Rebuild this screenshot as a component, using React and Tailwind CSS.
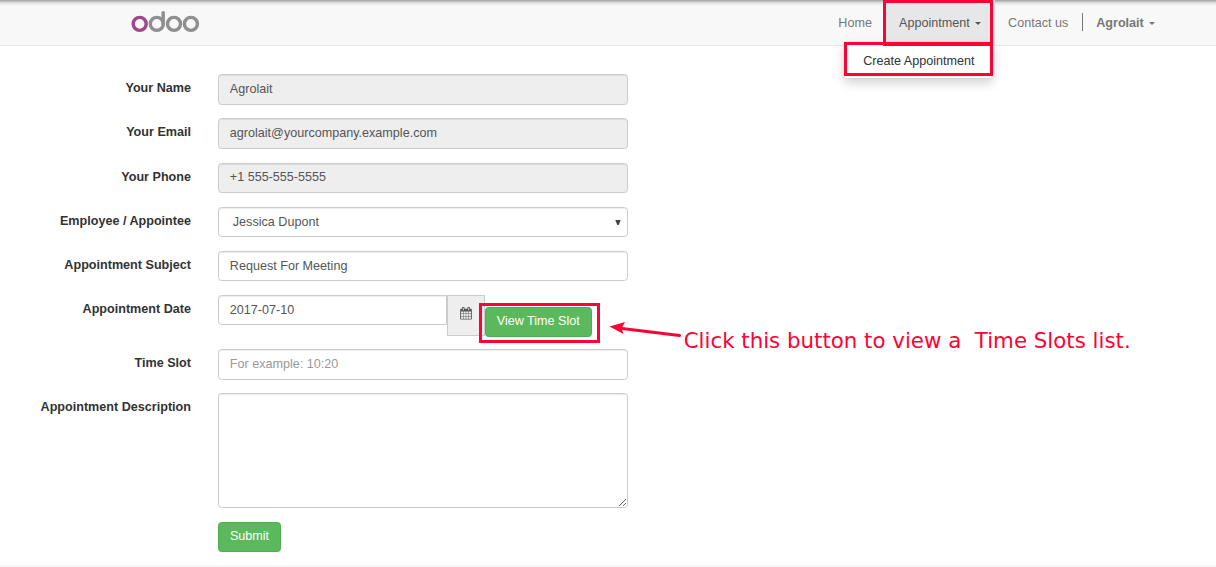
const Caret = () => (
  <span className="ml-[5px] inline-block h-0 w-0 border-x-[3.5px] border-t-[3.5px] border-x-transparent border-t-current align-middle" />
);

const Logo = () => (
  <svg className="ml-[131px] mt-[10px] block h-[24px] w-[70px]" viewBox="131 10 70 24" fill="none" strokeWidth="3.4">
    <circle cx="156.8" cy="23.9" r="6.5" stroke="#8f8f8f" />
    <path d="M163.2 12.6V24" stroke="#8f8f8f" strokeLinecap="round" />
    <circle cx="174" cy="23.9" r="6.5" stroke="#8f8f8f" />
    <circle cx="190.9" cy="23.9" r="6.5" stroke="#8f8f8f" />
    <circle cx="139.7" cy="23.9" r="6.5" stroke="#a24689" />
  </svg>
);

const CalendarIcon = () => (
  <svg className="h-[12.6px] w-[12px]" viewBox="0 0 1664 1792" fill="#555">
    <path d="M128 1664h288v-288h-288v288zm352 0h320v-288h-320v288zm-352-352h288v-320h-288v320zm352 0h320v-320h-320v320zm-352-384h288v-288h-288v288zm736 736h320v-288h-320v288zm-384-736h320v-288h-320v288zm768 736h288v-288h-288v288zm-384-352h320v-320h-320v320zm-352-864v-288q0-13-9.5-22.5t-22.5-9.5h-64q-13 0-22.5 9.5t-9.5 22.5v288q0 13 9.5 22.5t22.5 9.5h64q13 0 22.5-9.5t9.5-22.5zm736 864h288v-320h-288v320zm-384-384h320v-288h-320v288zm384 0h288v-288h-288v288zm32-480v-288q0-13-9.5-22.5t-22.5-9.5h-64q-13 0-22.5 9.5t-9.5 22.5v288q0 13 9.5 22.5t22.5 9.5h64q13 0 22.5-9.5t9.5-22.5zm384-64v1280q0 52-38 90t-90 38h-1408q-52 0-90-38t-38-90v-1280q0-52 38-90t90-38h128v-96q0-66 47-113t113-47h64q66 0 113 47t47 113v96h384v-96q0-66 47-113t113-47h64q66 0 113 47t47 113v96h128q52 0 90 38t38 90z" />
  </svg>
);

const control =
  "block h-[30.6px] w-full rounded-[3.6px] border border-[#ccc] px-[10.8px] text-[#555] shadow-[inset_0_1px_1px_rgba(0,0,0,0.075)] outline-none placeholder:text-[#999]";

const Row = ({ label, children }) => (
  <div className="mb-[13.5px] flex items-start">
    <label className="w-[191px] shrink-0 pt-[5px] text-right font-bold leading-[18px] text-[#333]">{label}</label>
    <div className="ml-[27px] w-[410px]">{children}</div>
  </div>
);

const button =
  "h-[30.6px] rounded-[3.6px] border border-[#4cae4c] bg-[#5cb85c] px-[10.8px] pb-[2px] leading-[18px] text-white";

export default function App() {
  return (
    <div className="relative flex h-[567px] w-[1216px] flex-col overflow-hidden bg-white font-['Liberation_Sans',Arial,sans-serif] text-[12.6px]">
      <header className="flex h-[46px] shrink-0 items-start justify-between border-b border-[#e7e7e7] bg-[#f8f8f8] bg-[linear-gradient(to_bottom,#a3a3a3_0px,#b0b0b0_1px,#d2d2d2_2px,#ececec_4px,#f8f8f8_6px)]">
        <Logo />
        <nav className="flex h-[45px] items-center pr-[47.7px] text-[#777]">
          <a className="-ml-[0.4px] mr-[0.4px] px-[13.5px] pt-px">Home</a>
          <div className="relative flex h-full items-center bg-[#e7e7e7] px-[13.5px] text-[#555]">
            <span className="-ml-[0.3px] mr-[0.3px] whitespace-nowrap pt-px">Appointment<Caret /></span>
            <div className="absolute -left-[2.8px] right-[1.6px] top-0 z-20 h-[46px] border-[3px] border-[#fb0335]" />
            <div className="absolute right-[1.6px] top-[42px] z-10 flex h-[36px] w-[149px] items-start rounded-b-[3px] bg-white shadow-[0_5px_11px_rgba(0,0,0,0.175),0_0_1px_rgba(0,0,0,0.35)]">
              <span className="flex h-[34px] w-full items-center whitespace-nowrap border-[3px] border-[#fb0335] pl-[16.2px] pt-[4px] text-[#333]">
                Create Appointment
              </span>
            </div>
          </div>
          <a className="px-[13.5px] pt-px">Contact us</a>
          <span className="mb-[2px] h-[18px] w-px bg-[#777]" />
          <a className="px-[13.5px] pt-px font-bold">Agrolait<Caret /></a>
        </nav>
      </header>

      <form className="pt-[28.35px]">
        <Row label="Your Name">
          <input className={control + " bg-[#eee] pb-[2px]"} defaultValue="Agrolait" readOnly />
        </Row>
        <Row label="Your Email">
          <input className={control + " bg-[#eee] pb-[2px]"} defaultValue="agrolait@yourcompany.example.com" readOnly />
        </Row>
        <Row label="Your Phone">
          <input className={control + " bg-[#eee] pb-[2px]"} defaultValue="+1 555-555-5555" readOnly />
        </Row>
        <Row label="Employee / Appointee">
          <div className={control + " flex items-center justify-between pl-[13.8px] pr-[6px]"}>
            <span className="pt-[1.5px]">Jessica Dupont</span>
            <svg className="mt-px h-[5px] w-[6px]" viewBox="0 0 6 5">
              <path d="M0.3 0H5.7L3.7 5H2.3Z" fill="#444" />
            </svg>
          </div>
        </Row>
        <Row label="Appointment Subject">
          <input className={control} defaultValue="Request For Meeting" />
        </Row>
        <Row label="Appointment Date">
          <div className="flex h-[40.8px] items-start">
            <input
              className="h-[30.6px] w-[229px] shrink-0 rounded-l-[3.6px] border border-[#ccc] px-[10.8px] text-[#555] shadow-[inset_0_1px_1px_rgba(0,0,0,0.075)] outline-none"
              defaultValue="2017-07-10"
            />
            <span className="flex h-[41px] w-[38px] shrink-0 items-center justify-center border border-[#ccc] bg-[#eee] pb-[4px]">
              <CalendarIcon />
            </span>
            <div className="relative -ml-[0.5px] mt-[12px] shrink-0">
              <button type="button" className={button + " w-[107.5px] whitespace-nowrap"}>View Time Slot</button>
              <div className="absolute -left-[5.5px] -top-[4px] h-[40px] w-[121px] border-[3px] border-[#fb0335]" />
            </div>
            <div className="ml-[15.5px] mt-[26px] flex shrink-0 items-start">
              <svg className="h-[20px] w-[74px] shrink-0" viewBox="608 321 74 20">
                <path d="M618 328L679.5 335.5" stroke="#fb0335" strokeWidth="3" strokeLinecap="round" />
                <path d="M609.5 326.5L625 322L621.5 328.3L623.5 334Z" fill="#fb0335" />
              </svg>
              <span className="ml-[2.2px] mt-[7px] whitespace-pre font-['DejaVu_Sans',sans-serif] text-[21.33px] leading-[26px] text-[#fb0335]">
                {"Click this button to view a  Time Slots list."}
              </span>
            </div>
          </div>
        </Row>
        <Row label="Time Slot">
          <input className={control} placeholder="For example: 10:20" />
        </Row>
        <Row label="Appointment Description">
          <textarea className="block h-[115px] w-full resize rounded-[3.6px] border border-[#ccc] shadow-[inset_0_1px_1px_rgba(0,0,0,0.075)] outline-none" />
        </Row>
        <div className="pl-[218px]">
          <button type="button" className={button + " w-[63px]"}>Submit</button>
        </div>
      </form>
      <footer className="mt-auto h-[2px] shrink-0 bg-[#f8f8f8]" />
    </div>
  );
}
